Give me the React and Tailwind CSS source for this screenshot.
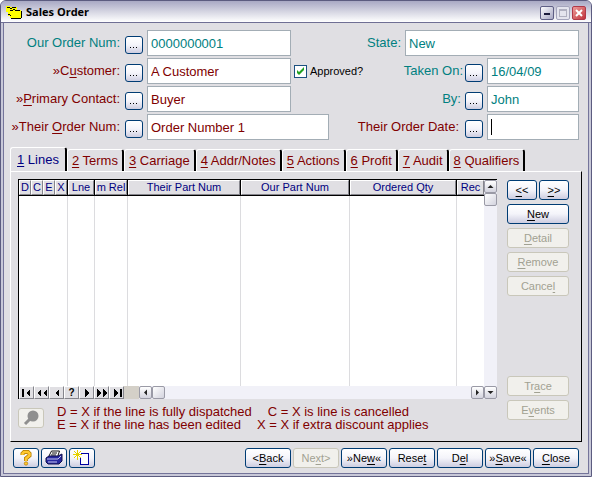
import { useState } from 'react';

const FIELD =
  'h-[26px] min-w-0 border border-[#a3adb5] bg-white px-[3px] text-[13px] outline-none';
const BUTTON =
  'flex items-center justify-center whitespace-nowrap rounded-[3px] border border-[#003c74] bg-gradient-to-b from-white via-[#f4f4fa] to-[#cdcde0] text-[11px] text-black disabled:border-[#c9c7ba] disabled:bg-none disabled:bg-[#f1f0ec] disabled:text-[#a1a192]';
const BEVEL =
  'border border-t-white border-l-white border-r-[#85858c] border-b-[#85858c] bg-[#e0dfe3]';

// "&" marks the access key, as in a menu caption
const Caption = ({ text }) => {
  const at = text.indexOf('&');
  if (at < 0) return text;
  return (
    <span>
      {text.slice(0, at)}
      <span className="underline underline-offset-2">{text[at + 1]}</span>
      {text.slice(at + 2)}
    </span>
  );
};

const Lookup = ({ label }) => (
  <button type="button" aria-label={`Look up ${label}`} className={`${BUTTON} mt-1 h-[18px] w-[18px] shrink-0`}>
    <svg width="8" height="8" viewBox="0 0 8 8" shapeRendering="crispEdges">
      <path d="M0 6h1v1H0zM3 6h1v1H3zM6 6h1v1H6z" fill="#000" />
    </svg>
  </button>
);

const Label = ({ id, text, className }) => (
  <label htmlFor={id} className={`whitespace-nowrap text-right text-[13px] ${className}`}>
    <Caption text={text} />
  </label>
);

const Arrow = ({ d }) => (
  <svg width="12" height="10" viewBox="0 0 12 10" fill="#000" shapeRendering="crispEdges">
    <path d={d} />
  </svg>
);

const TABS = ['&1 Lines', '&2 Terms', '&3 Carriage', '&4 Addr/Notes', '&5 Actions', '&6 Profit', '&7 Audit', '&8 Qualifiers'];

const COLUMNS = [
  { title: 'D', col: 'w-3' },
  { title: 'C', col: 'w-3' },
  { title: 'E', col: 'w-3' },
  { title: 'X', col: 'w-[13px]', line: true },
  { title: 'Lne', col: 'w-[27px]', line: true },
  { title: 'm Rel', col: 'w-[33px]', line: true },
  { title: 'Their Part Num', col: 'w-[113px]', line: true },
  { title: 'Our Part Num', col: 'w-[109px]', line: true },
  { title: 'Ordered Qty', col: 'w-[107px]', line: true },
  { title: 'Rec', col: 'w-auto' },
];

const NAV = [
  { name: 'First', d: 'M1 1h2v8H1zM9 1v8L5 5z' },
  { name: 'Page back', d: 'M5 1v8L1 5zM11 1v8L7 5z' },
  { name: 'Previous', d: 'M8 1v8L4 5z' },
  { name: 'Locate', text: '?' },
  { name: 'Next', d: 'M4 1v8l4-4z' },
  { name: 'Page forward', d: 'M1 1v8l4-4zM7 1v8l4-4z' },
  { name: 'Last', d: 'M3 1v8l4-4zM9 1h2v8H9z' },
];

const ScrollButton = ({ name, d }) => (
  <button
    type="button"
    aria-label={name}
    className="flex h-[13px] w-[13px] shrink-0 items-center justify-center rounded-[2px] border border-[#9a9aa6] bg-gradient-to-b from-white to-[#d3d3de]"
  >
    <svg width="9" height="9" viewBox="0 0 9 9" fill="#222">
      <path d={d} />
    </svg>
  </button>
);

const Thumb = () => (
  <div className="h-[13px] w-[13px] shrink-0 rounded-[2px] border border-[#9a9aa6] bg-gradient-to-br from-white to-[#d3d3de]" />
);

const TitleBar = () => (
  <header className="flex h-[22px] items-center border-b border-[#6f6f94] bg-gradient-to-b from-[#a9a9c4] via-[#d5d5e2] to-white pl-[5px] pr-[5px] pt-0.5">
    <svg width="16" height="13" viewBox="0 0 16 13" shapeRendering="crispEdges">
      <path d="M0 0h4v1h7v3h4v8H4v-2H2V6H0z" fill="#ff0" />
      <path d="M1 1h3v1H1zM4 2h2v1H4zM6 1h4v1H6zM4 4h3v1H4zM7 3h2v1H7zM9 4h5v1H9zM2 8h2v1H2zM4 9h1v1H4zM15 5h1v7h-1zM5 12h10v1H5z" fill="#000" />
    </svg>
    <h1 className="ml-1 flex-1 font-['Open_Sans','Noto_Sans',sans-serif] text-[11px] font-bold text-black">Sales Order</h1>
    <div className="flex gap-0.5">
      <button type="button" aria-label="Minimize" className="flex h-[14px] w-[14px] items-center justify-center rounded-[2px] border border-[#5f5f85] bg-gradient-to-br from-white to-[#a6a6c2]">
        <svg width="8" height="8" viewBox="0 0 8 8"><path d="M1 4h6v2H1z" fill="#1c1c3c" /></svg>
      </button>
      <button type="button" aria-label="Maximize" disabled className="flex h-[14px] w-[14px] items-center justify-center rounded-[2px] border border-[#a4a4bc] bg-[#e4e4ee]">
        <svg width="8" height="8" viewBox="0 0 8 8" shapeRendering="crispEdges">
          <path d="M0 0h8v8H0zM1 2v5h6V2z" fillRule="evenodd" fill="#b0b0c0" />
        </svg>
      </button>
      <button type="button" aria-label="Close window" className="flex h-[14px] w-[14px] items-center justify-center rounded-[2px] border border-[#b03848] bg-gradient-to-br from-[#ec9a9a] to-[#c02f3c]">
        <svg width="8" height="8" viewBox="0 0 8 8"><path d="M1 1l6 6M7 1L1 7" stroke="#fff" strokeWidth="2" /></svg>
      </button>
    </div>
  </header>
);

const OrderForm = () => (
  <div className="flex flex-col gap-0.5 pl-1 pr-[9px] pt-[7px]">
    <div className="flex items-center">
      <Label id="orderNum" text="Our Order Num:" className="w-28 text-[#008080]" />
      <div className="ml-[5px] mr-1 flex"><Lookup label="order number" /></div>
      <input id="orderNum" defaultValue="0000000001" className={`${FIELD} w-36 text-[#008080]`} />
      <Label id="state" text="State:" className="flex-1 pr-1 text-[#008080]" />
      <input id="state" defaultValue="New" className={`${FIELD} w-[174px] text-[#008080]`} />
    </div>
    <div className="flex items-center">
      <Label id="customer" text="»C&ustomer:" className="w-28 text-[#800000]" />
      <div className="ml-[5px] mr-1 flex"><Lookup label="customer" /></div>
      <input id="customer" defaultValue="A Customer" className={`${FIELD} w-36 text-[#800000]`} />
      <label className="ml-[3px] flex items-center gap-[3px] whitespace-nowrap text-[11px] text-black">
        <span className="grid">
          <input
            type="checkbox"
            defaultChecked
            className="peer col-start-1 row-start-1 h-[13px] w-[13px] appearance-none border border-[#1c5180] bg-white"
          />
          <svg width="13" height="13" viewBox="0 0 13 13" className="pointer-events-none invisible col-start-1 row-start-1 peer-checked:visible">
            <path d="M3 5v3l2 2 5-5V2L5 7z" fill="#21a121" />
          </svg>
        </span>
        Approved?
      </label>
      <Label id="takenOn" text="Taken On:" className="flex-1 pr-0.5 text-[#008080]" />
      <div className="mr-1 flex"><Lookup label="date taken" /></div>
      <input id="takenOn" defaultValue="16/04/09" className={`${FIELD} w-[92px] text-[#008080]`} />
    </div>
    <div className="flex items-center">
      <Label id="contact" text="»&Primary Contact:" className="w-28 text-[#800000]" />
      <div className="ml-[5px] mr-1 flex"><Lookup label="contact" /></div>
      <input id="contact" defaultValue="Buyer" className={`${FIELD} w-36 text-[#800000]`} />
      <Label id="takenBy" text="By:" className="flex-1 pr-1 text-[#008080]" />
      <div className="mr-1 flex"><Lookup label="taken by" /></div>
      <input id="takenBy" defaultValue="John" className={`${FIELD} w-[92px] text-[#008080]`} />
    </div>
    <div className="flex items-center">
      <Label id="theirNum" text="»Their &Order Num:" className="w-28 text-[#800000]" />
      <div className="ml-[5px] mr-1 flex"><Lookup label="their order number" /></div>
      <input id="theirNum" defaultValue="Order Number 1" className={`${FIELD} w-[182px] text-[#800000]`} />
      <Label id="theirDate" text="Their Order Date:" className="flex-1 pr-1.5 text-[#800000]" />
      <div className="mr-1 flex"><Lookup label="their order date" /></div>
      <div className={`${FIELD} flex w-[92px] items-center`}>
        <span className="h-4 w-px bg-black" />
        <input id="theirDate" className="w-full min-w-0 bg-transparent outline-none" />
      </div>
    </div>
  </div>
);

const LinesGrid = () => (
  <div className="flex min-w-0 flex-1 flex-col border-l border-t border-black bg-white">
    <div className="flex flex-1">
      <div className="flex min-w-0 flex-1 overflow-hidden">
        <table className="h-full w-full table-fixed border-separate border-spacing-0">
          <thead>
            <tr className="h-4">
              {COLUMNS.map((c) => (
                <th
                  key={c.title}
                  className={`${c.col} border-b border-black p-0 text-[11px] font-normal text-[#000080] ${c.line ? 'border-r' : ''}`}
                >
                  <div className={`flex h-[15px] items-center justify-center whitespace-nowrap ${BEVEL}`}>{c.title}</div>
                </th>
              ))}
            </tr>
          </thead>
          <tbody>
            <tr>
              {COLUMNS.map((c) => (
                <td key={c.title} className={c.line ? 'border-r border-[#dcdcdf]' : ''} />
              ))}
            </tr>
          </tbody>
        </table>
      </div>
      <div className="w-[13px] bg-[#f1f1f8]">
        <ScrollButton name="Scroll up" d="M4.5 3L7.5 6h-6z" />
        <Thumb />
      </div>
    </div>
    <div className="flex h-[13px] bg-[#f1f1f8]">
      <div className="flex">
        {NAV.map((n) => (
          <button key={n.name} type="button" aria-label={n.name} className={`flex h-[13px] w-[15px] items-center justify-center text-[10px] font-bold ${BEVEL}`}>
            {n.text || <Arrow d={n.d} />}
          </button>
        ))}
      </div>
      <div className="w-[15px] bg-[#d4d0c8]" />
      <ScrollButton name="Scroll left" d="M6 1.5v6L3 4.5z" />
      <Thumb />
      <div className="flex-1" />
      <ScrollButton name="Scroll right" d="M3 1.5v6l3-3z" />
      <ScrollButton name="Scroll down" d="M4.5 6L1.5 3h6z" />
    </div>
  </div>
);

const SideButtons = () => (
  <div className="flex w-[62px] flex-col gap-1 pb-[11px] pt-px">
    <div className="flex gap-0.5">
      <button type="button" className={`${BUTTON} h-5 flex-1`}><Caption text="&<<" /></button>
      <button type="button" className={`${BUTTON} h-5 flex-1`}><Caption text="&>>" /></button>
    </div>
    <button type="button" className={`${BUTTON} h-5`}><Caption text="&New" /></button>
    <button type="button" disabled className={`${BUTTON} h-5`}><Caption text="&Detail" /></button>
    <button type="button" disabled className={`${BUTTON} h-5`}><Caption text="&Remove" /></button>
    <button type="button" disabled className={`${BUTTON} h-5`}><Caption text="Cance&l" /></button>
    <div className="flex-1" />
    <button type="button" disabled className={`${BUTTON} h-5`}><Caption text="Tr&ace" /></button>
    <button type="button" disabled className={`${BUTTON} h-5`}><Caption text="E&vents" /></button>
  </div>
);

const Legend = () => (
  <div className="flex items-center pt-1.5">
    <button type="button" aria-label="Zoom" disabled className={`${BUTTON} h-5 w-[26px]`}>
      <svg width="18" height="16" viewBox="0 0 18 16">
        <circle cx="11" cy="6" r="5.500" fill="#8f8f8f" />
        <path d="M8 9l-5 5" stroke="#8f8f8f" strokeWidth="3" />
      </svg>
    </button>
    <div className="ml-[13px] whitespace-nowrap text-[13px] leading-[13px] text-[#800000]">
      <p className="flex gap-4"><span>D = X if the line is fully dispatched</span><span>C = X is line is cancelled</span></p>
      <p className="flex gap-4"><span>E = X if the line has been edited</span><span>X = X if extra discount applies</span></p>
    </div>
  </div>
);

const Footer = () => (
  <footer className="flex gap-0.5 px-[9px] pb-[5px] pt-1.5">
    <button type="button" aria-label="Help" className={`${BUTTON} h-5 w-[26px]`}>
      <svg width="12" height="16" viewBox="0 0 12 16">
        <path d="M2.500 5V3.500L4 2h4l1.500 1.500v2L6 8.500V11" fill="none" stroke="#b07800" strokeWidth="4" />
        <path d="M2.500 5V3.500L4 2h4l1.500 1.500v2L6 8.500V11" fill="none" stroke="#ffc830" strokeWidth="2.500" />
        <circle cx="6" cy="13.500" r="1.700" fill="#ffc830" stroke="#b07800" strokeWidth=".7" />
      </svg>
    </button>
    <button type="button" aria-label="Print" className={`${BUTTON} h-5 w-[26px]`}>
      <svg width="18" height="16" viewBox="0 0 18 16">
        <path d="M6.500 1h8l-2 6h-9z" fill="#fff" stroke="#111" />
        <path d="M7 3h5M6 5h5" stroke="#111" />
        <path d="M1 8l3-2h9l4-2v7l-3 3H3l-2-2z" fill="#2828a0" stroke="#10104c" />
        <path d="M2 9h11l3-3M3 12h9" stroke="#c8c8f0" fill="none" />
      </svg>
    </button>
    <button type="button" aria-label="New record" className={`${BUTTON} h-5 w-[26px]`}>
      <svg width="20" height="16" viewBox="0 0 20 16" shapeRendering="crispEdges">
        <path d="M8 3h9v12H8zM9 4v10h7V4z" fillRule="evenodd" fill="#0000a0" />
        <path d="M9 4h7v10H9z" fill="#fff" />
        <path d="M3 2h6v6H3z" fill="#fff" />
        <path d="M5 0h1v3H5zM5 6h1v4H5zM1 4h4v1H1zM7 4h3v1H7zM4 3h3v3H4zM2 1h1v1H2zM3 2h1v1H3zM8 1h1v1H8zM7 2h1v1H7zM2 7h1v1H2zM3 6h1v1H3zM8 7h1v1H8zM7 6h1v1H7z" fill="#e6d200" />
      </svg>
    </button>
    <div className="flex-1" />
    <button type="button" className={`${BUTTON} h-5 w-[46px]`}><Caption text="<&Back" /></button>
    <button type="button" disabled className={`${BUTTON} h-5 w-[46px]`}><Caption text="Ne&xt>" /></button>
    <button type="button" className={`${BUTTON} h-5 w-[46px]`}><Caption text="»Ne&w«" /></button>
    <button type="button" className={`${BUTTON} h-5 w-[46px]`}><Caption text="Rese&t" /></button>
    <button type="button" className={`${BUTTON} h-5 w-[46px]`}><Caption text="D&el" /></button>
    <button type="button" className={`${BUTTON} h-5 w-[46px]`}><Caption text="»&Save«" /></button>
    <button type="button" className={`${BUTTON} h-5 w-[46px]`}><Caption text="&Close" /></button>
  </footer>
);

export default function App() {
  const [tab, setTab] = useState(0);

  return (
    <div className="flex min-h-screen flex-col overflow-hidden rounded-t-md border border-[#5c5c80] bg-[#c8c8d8] font-['Liberation_Sans',Arial,sans-serif]">
      <TitleBar />
      <main className="mx-0.5 mb-0.5 flex flex-1 flex-col border border-t-0 border-[#74749a] bg-[#e0dfe3]">
        <OrderForm />
        <div role="tablist" className="mt-[7px] flex items-end pl-1.5">
          {TABS.map((t, i) => (
            <button
              key={t}
              type="button"
              role="tab"
              aria-selected={i === tab}
              onClick={() => setTab(i)}
              className={`whitespace-nowrap rounded-t-[3px] border-l border-t border-r-2 border-l-white border-t-white border-r-black text-[13px] ${
                i === tab ? 'h-6 px-1.5 text-[#000080]' : 'h-[22px] px-1 text-[#800000]'
              }`}
            >
              <Caption text={t} />
            </button>
          ))}
        </div>
        <section className="mx-1.5 flex flex-1 flex-col border-b border-l border-r border-t border-b-black border-l-white border-r-black border-t-white pb-2.5 pl-[7px] pr-3 pt-[7px]">
          <div className="flex flex-1 gap-2.5">
            <div className="flex min-w-0 flex-1 flex-col">
              <LinesGrid />
              <Legend />
            </div>
            <SideButtons />
          </div>
        </section>
        <Footer />
      </main>
    </div>
  );
}
